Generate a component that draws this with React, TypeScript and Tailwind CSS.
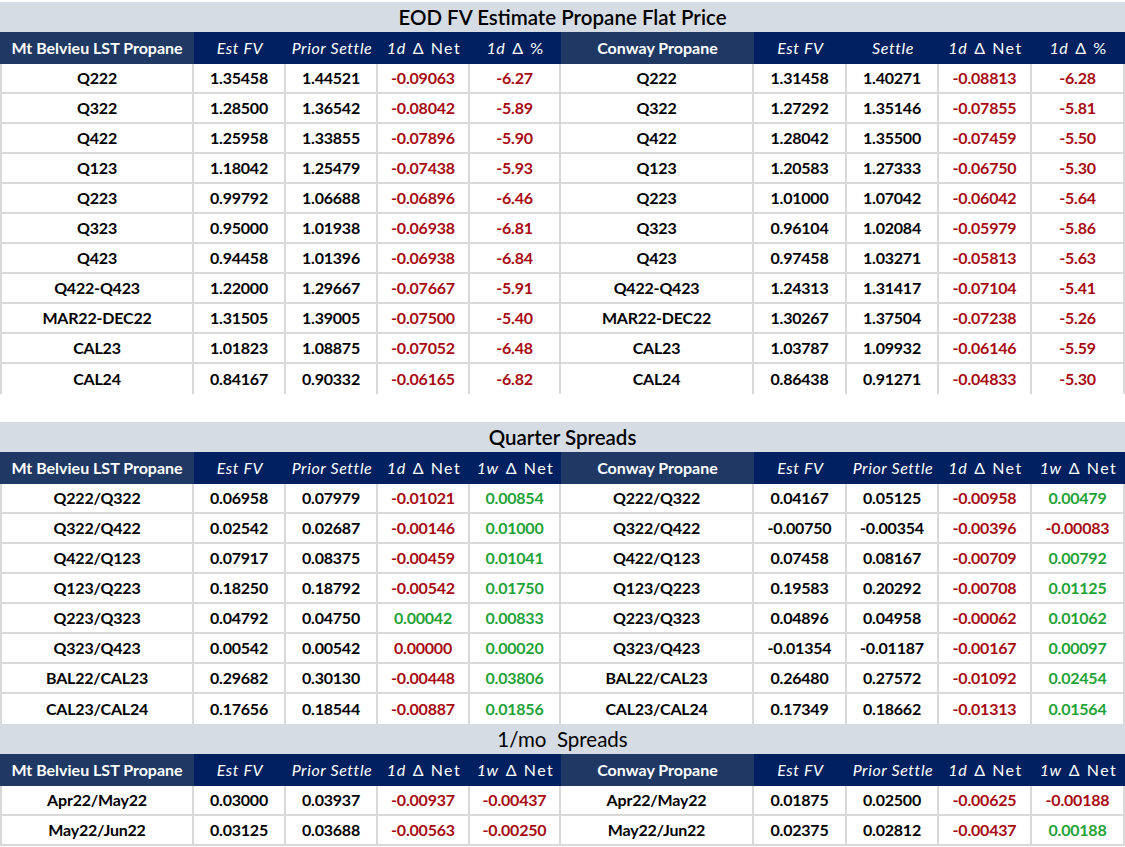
import React from "react";

const COLS = [
  "w-[194px]",
  "w-[92px]",
  "w-[92px]",
  "w-[92px]",
  "w-[91px]",
  "w-[193px]",
  "w-[93px]",
  "w-[92px]",
  "w-[93px]",
  "w-[93px]",
];

type Row = string[];

interface Section {
  title: string;
  heavy: boolean;
  headers: React.ReactNode[];
  rows: Row[];
  lastBorder: boolean;
}

const delta = (a: string, b: string) => (
  <>
    <i>{a}</i>
    <span className="ml-[7px] tracking-[1.5px] not-italic">{b}</span>
  </>
);

const spreadHeaders = [
  "Mt Belvieu LST Propane",
  "Est FV",
  "Prior Settle",
  delta("1d", "Δ Net"),
  delta("1w", "Δ Net"),
  "Conway Propane",
  "Est FV",
  "Prior Settle",
  delta("1d", "Δ Net"),
  delta("1w", "Δ Net"),
];

const sections: Section[] = [
  {
    title: "EOD FV Estimate Propane Flat Price",
    heavy: true,
    headers: [
      "Mt Belvieu LST Propane",
      "Est FV",
      "Prior Settle",
      delta("1d", "Δ Net"),
      delta("1d", "Δ %"),
      "Conway Propane",
      "Est FV",
      "Settle",
      delta("1d", "Δ Net"),
      delta("1d", "Δ %"),
    ],
    lastBorder: false,
    rows: [
      ["Q222", "1.35458", "1.44521", "-0.09063", "-6.27", "Q222", "1.31458", "1.40271", "-0.08813", "-6.28"],
      ["Q322", "1.28500", "1.36542", "-0.08042", "-5.89", "Q322", "1.27292", "1.35146", "-0.07855", "-5.81"],
      ["Q422", "1.25958", "1.33855", "-0.07896", "-5.90", "Q422", "1.28042", "1.35500", "-0.07459", "-5.50"],
      ["Q123", "1.18042", "1.25479", "-0.07438", "-5.93", "Q123", "1.20583", "1.27333", "-0.06750", "-5.30"],
      ["Q223", "0.99792", "1.06688", "-0.06896", "-6.46", "Q223", "1.01000", "1.07042", "-0.06042", "-5.64"],
      ["Q323", "0.95000", "1.01938", "-0.06938", "-6.81", "Q323", "0.96104", "1.02084", "-0.05979", "-5.86"],
      ["Q423", "0.94458", "1.01396", "-0.06938", "-6.84", "Q423", "0.97458", "1.03271", "-0.05813", "-5.63"],
      ["Q422-Q423", "1.22000", "1.29667", "-0.07667", "-5.91", "Q422-Q423", "1.24313", "1.31417", "-0.07104", "-5.41"],
      ["MAR22-DEC22", "1.31505", "1.39005", "-0.07500", "-5.40", "MAR22-DEC22", "1.30267", "1.37504", "-0.07238", "-5.26"],
      ["CAL23", "1.01823", "1.08875", "-0.07052", "-6.48", "CAL23", "1.03787", "1.09932", "-0.06146", "-5.59"],
      ["CAL24", "0.84167", "0.90332", "-0.06165", "-6.82", "CAL24", "0.86438", "0.91271", "-0.04833", "-5.30"],
    ],
  },
  {
    title: "Quarter Spreads",
    heavy: true,
    headers: spreadHeaders,
    lastBorder: false,
    rows: [
      ["Q222/Q322", "0.06958", "0.07979", "-0.01021", "0.00854", "Q222/Q322", "0.04167", "0.05125", "-0.00958", "0.00479"],
      ["Q322/Q422", "0.02542", "0.02687", "-0.00146", "0.01000", "Q322/Q422", "-0.00750", "-0.00354", "-0.00396", "-0.00083"],
      ["Q422/Q123", "0.07917", "0.08375", "-0.00459", "0.01041", "Q422/Q123", "0.07458", "0.08167", "-0.00709", "0.00792"],
      ["Q123/Q223", "0.18250", "0.18792", "-0.00542", "0.01750", "Q123/Q223", "0.19583", "0.20292", "-0.00708", "0.01125"],
      ["Q223/Q323", "0.04792", "0.04750", "0.00042", "0.00833", "Q223/Q323", "0.04896", "0.04958", "-0.00062", "0.01062"],
      ["Q323/Q423", "0.00542", "0.00542", "0.00000", "0.00020", "Q323/Q423", "-0.01354", "-0.01187", "-0.00167", "0.00097"],
      ["BAL22/CAL23", "0.29682", "0.30130", "-0.00448", "0.03806", "BAL22/CAL23", "0.26480", "0.27572", "-0.01092", "0.02454"],
      ["CAL23/CAL24", "0.17656", "0.18544", "-0.00887", "0.01856", "CAL23/CAL24", "0.17349", "0.18662", "-0.01313", "0.01564"],
    ],
  },
  {
    title: "1/mo  Spreads",
    heavy: false,
    headers: spreadHeaders,
    lastBorder: true,
    rows: [
      ["Apr22/May22", "0.03000", "0.03937", "-0.00937", "-0.00437", "Apr22/May22", "0.01875", "0.02500", "-0.00625", "-0.00188"],
      ["May22/Jun22", "0.03125", "0.03688", "-0.00563", "-0.00250", "May22/Jun22", "0.02375", "0.02812", "-0.00437", "0.00188"],
    ],
  },
];

// change columns are red unless positive
function tone(i: number, v: string) {
  const col = i % 5;
  if (col < 3) return "text-black";
  if (v.startsWith("-") || v === "0.00000") return "text-[#a80a12]";
  return "text-[#1fa337]";
}

function TableSection({ s }: { s: Section }) {
  return (
    <div>
      <div
        className={`h-[30px] bg-[#d6dce4] flex items-center justify-center text-[20.5px] text-black leading-none whitespace-pre ${
          s.heavy ? "font-semibold" : "font-normal"
        }`}
      >
        {s.title}
      </div>
      <div className="flex h-[32px]">
        {s.headers.map((h, i) => (
          <div
            key={i}
            className={`${COLS[i]} flex items-center justify-center text-white text-[16px] whitespace-nowrap ${
              i % 5 === 0 ? "bg-[#1f3864] font-bold" : "bg-[#002060] italic tracking-[0.6px]"
            }`}
          >
            {h}
          </div>
        ))}
      </div>
      {s.rows.map((r, ri) => {
        const last = ri === s.rows.length - 1 && !s.lastBorder;
        return (
          <div key={ri} className={`flex h-[30px] border-[#d9d9d9] ${last ? "" : "border-b-2"}`}>
            {r.map((v, i) => (
              <div
                key={i}
                className={`${COLS[i]} flex items-center justify-center border-r-2 border-[#d9d9d9] text-[16px] tracking-[-0.2px] font-bold ${
                  i === 0 ? "border-l-2" : ""
                } ${tone(i, v)}`}
              >
                {v}
              </div>
            ))}
          </div>
        );
      })}
    </div>
  );
}

export default function App() {
  return (
    <div className="w-[1125px] h-[847px] bg-white overflow-hidden pt-[2px] font-['Lato','Open_Sans',sans-serif]">
      <TableSection s={sections[0]} />
      <div className="h-[28px]" />
      <TableSection s={sections[1]} />
      <TableSection s={sections[2]} />
    </div>
  );
}
